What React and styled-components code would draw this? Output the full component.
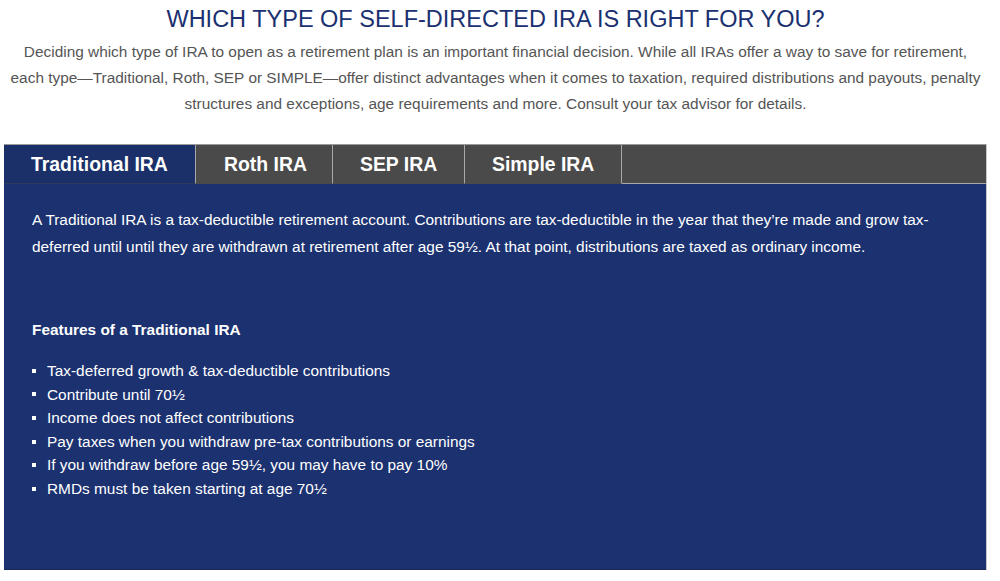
import React, { useState } from "react";
import styled, { createGlobalStyle } from "styled-components";

const Global = createGlobalStyle`
  html, body { margin: 0; padding: 0; background: #fff; }
  body { font-family: "Liberation Sans", Arial, sans-serif; }
`;

const Page = styled.div`
  width: 983px;
  margin-left: 4px;
  padding-top: 5px;
`;

const Title = styled.h2`
  margin: 0;
  font-size: 23.5px;
  line-height: 29px;
  font-weight: 400;
  color: #1b3070;
  text-align: center;
  text-transform: uppercase;
`;

const Intro = styled.p`
  margin: 5px 0 0;
  font-size: 15.4px;
  line-height: 26px;
  color: #555;
  text-align: center;
`;

const Tabs = styled.div`
  margin-top: 27px;
  border-right: 1px solid #c8c8c8;
`;

const TabBar = styled.div`
  display: flex;
  height: 40px;
  background: #4a4a4a;
  border-top: 1px solid #9a9a9a;
  box-sizing: border-box;
`;

const Tab = styled.button`
  flex: none;
  width: ${(p) => p.$w}px;
  height: 39px;
  margin: 0;
  padding: 0 0 0 ${(p) => p.$pl}px;
  text-align: left;
  border: none;
  border-right: 1px solid #a8a8a8;
  border-bottom: 1px solid ${(p) => (p.$active ? "#2c3a5c" : "#4a4a4a")};
  background: ${(p) => (p.$active ? "#1b3069" : "#4a4a4a")};
  color: #fff;
  font-family: "Liberation Sans", Arial, sans-serif;
  font-size: 19.4px;
  font-weight: 700;
  cursor: pointer;
  box-sizing: border-box;
`;

const Filler = styled.div`
  flex: 1;
  border-bottom: 1px solid #a8a8a8;
`;

const Panel = styled.div`
  background: #1b3170;
  color: #fff;
  padding: 22px 28px 0 28px;
  height: 386px;
  box-sizing: border-box;
  border-bottom: 1px solid #14285c;
  font-size: 15.4px;
`;

const Lead = styled.p`
  margin: 0;
  line-height: 27px;
`;

const Heading = styled.h4`
  margin: 60px 0 0;
  font-size: 15.4px;
  line-height: 20px;
  font-weight: 700;
`;

const List = styled.ul`
  margin: 19px 0 0;
  padding: 0;
  list-style: none;
`;

const Item = styled.li`
  display: flex;
  align-items: center;
  line-height: 23.6px;
  &::before {
    content: "";
    width: 4px;
    height: 4px;
    background: #fff;
    margin: 0 11px 0 0;
    flex: none;
  }
`;

const tabs = [
  { label: "Traditional IRA", w: 192, pl: 27 },
  { label: "Roth IRA", w: 137, pl: 28 },
  { label: "SEP IRA", w: 132, pl: 27 },
  { label: "Simple IRA", w: 157, pl: 27 },
];

const items = [
  "Tax-deferred growth & tax-deductible contributions",
  "Contribute until 70½",
  "Income does not affect contributions",
  "Pay taxes when you withdraw pre-tax contributions or earnings",
  "If you withdraw before age 59½, you may have to pay 10%",
  "RMDs must be taken starting at age 70½",
];

export default function App() {
  const [active, setActive] = useState(0);
  return (
    <Page>
      <Global />
      <Title>Which type of Self-Directed IRA is right for you?</Title>
      <Intro>
        Deciding which type of IRA to open as a retirement plan is an important financial decision. While all IRAs offer a way to save for retirement,
        <br />
        each type—Traditional, Roth, SEP or SIMPLE—offer distinct advantages when it comes to taxation, required distributions and payouts, penalty
        <br />
        structures and exceptions, age requirements and more. Consult your tax advisor for details.
      </Intro>
      <Tabs>
        <TabBar>
          {tabs.map((t, i) => (
            <Tab key={t.label} $w={t.w} $pl={t.pl} $active={i === active} onClick={() => setActive(i)}>
              {t.label}
            </Tab>
          ))}
          <Filler />
        </TabBar>
        <Panel>
          <Lead>
            A Traditional IRA is a tax-deductible retirement account. Contributions are tax-deductible in the year that they’re made and grow tax-
            <br />
            deferred until until they are withdrawn at retirement after age 59½. At that point, distributions are taxed as ordinary income.
          </Lead>
          <Heading>Features of a Traditional IRA</Heading>
          <List>
            {items.map((it) => (
              <Item key={it}>{it}</Item>
            ))}
          </List>
        </Panel>
      </Tabs>
    </Page>
  );
}
